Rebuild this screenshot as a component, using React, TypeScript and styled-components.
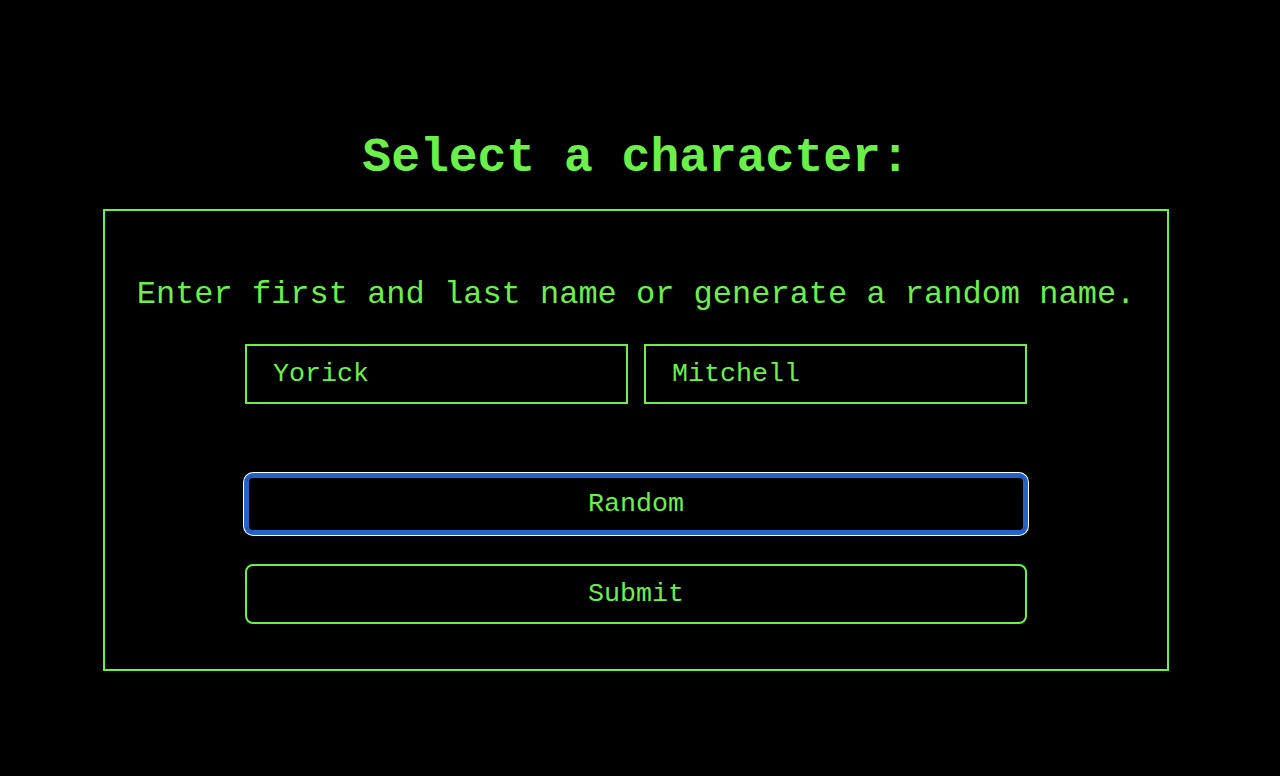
import React from "react";
import styled, { createGlobalStyle } from "styled-components";

const GREEN = "#6bf04a";
const FOCUS = "#2563c9";

const GlobalStyle = createGlobalStyle`
  html, body {
    margin: 0;
    padding: 0;
    background: #000;
  }
  body {
    font-family: "Liberation Mono", "Courier New", monospace;
    color: ${GREEN};
  }
`;

const Page = styled.main`
  min-height: 776px;
  box-sizing: border-box;
  padding: 131px 8px 0 0;
  display: flex;
  flex-direction: column;
  align-items: center;
`;

const Title = styled.h1`
  margin: 0 0 24px;
  font-family: "Liberation Mono", "Courier New", monospace;
  font-weight: 700;
  font-size: 48px;
  line-height: 54px;
  color: ${GREEN};
`;

const Panel = styled.section`
  width: 1066px;
  box-sizing: border-box;
  border: 2px solid ${GREEN};
  padding: 66px 0 45px;
  display: flex;
  flex-direction: column;
  align-items: center;
`;

const Prompt = styled.p`
  margin: 0 0 31px;
  font-size: 32px;
  line-height: 36px;
  white-space: nowrap;
`;

const Form = styled.form`
  width: 782px;
  display: flex;
  flex-direction: column;
`;

const NameRow = styled.div`
  display: flex;
  gap: 16px;
  margin-bottom: 70px;
`;

const NameInput = styled.input`
  flex: 1;
  min-width: 0;
  height: 60px;
  box-sizing: border-box;
  border: 2px solid ${GREEN};
  border-radius: 0;
  background: #000;
  color: ${GREEN};
  font-family: "Liberation Mono", "Courier New", monospace;
  font-size: 26.67px;
  padding: 0 26px;
  outline: none;
`;

const Actions = styled.div`
  display: flex;
  flex-direction: column;
  gap: 30px;
`;

const ActionButton = styled.button<{ $focused?: boolean }>`
  height: 60px;
  box-sizing: border-box;
  border: 2px solid ${(p) => (p.$focused ? FOCUS : GREEN)};
  border-radius: 8px;
  background: #000;
  color: ${GREEN};
  font-family: "Liberation Mono", "Courier New", monospace;
  font-size: 26.67px;
  cursor: pointer;
  outline: none;
  box-shadow: ${(p) =>
    p.$focused
      ? `0 0 0 1px ${FOCUS}, 0 0 0 2px #ffffff, inset 0 0 0 2px ${FOCUS}`
      : "none"};
`;

export default function App() {
  return (
    <>
      <GlobalStyle />
      <Page>
        <Title>Select a character:</Title>
        <Panel>
          <Prompt>Enter first and last name or generate a random name.</Prompt>
          <Form onSubmit={(e) => e.preventDefault()}>
            <NameRow>
              <NameInput defaultValue="Yorick" aria-label="First name" />
              <NameInput defaultValue="Mitchell" aria-label="Last name" />
            </NameRow>
            <Actions>
              <ActionButton type="button" $focused>
                Random
              </ActionButton>
              <ActionButton type="submit">Submit</ActionButton>
            </Actions>
          </Form>
        </Panel>
      </Page>
    </>
  );
}
